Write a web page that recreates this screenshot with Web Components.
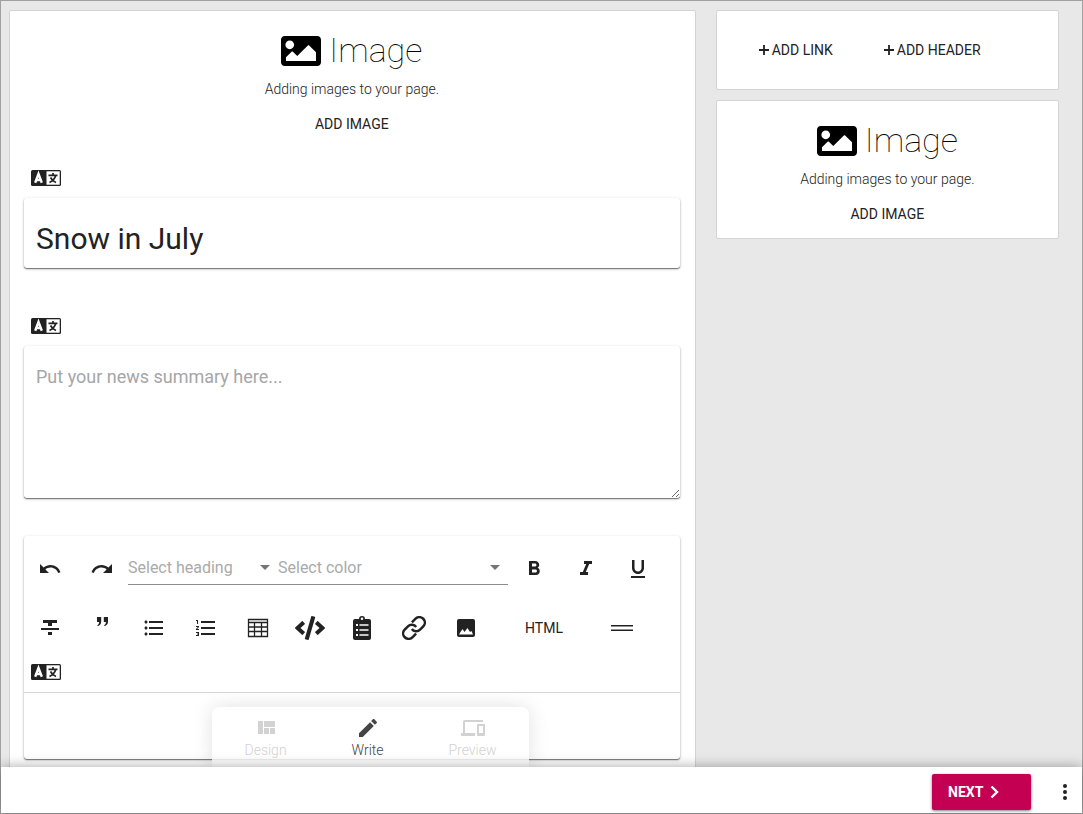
<!DOCTYPE html>
<html lang="en">
<head>
<meta charset="utf-8">
<title>News editor</title>
<style>
  html, body { height: 100%; margin: 0; }
  body { font: 14px/20px Roboto, "Liberation Sans", sans-serif; color: #222; }
</style>
</head>
<body>
<news-editor></news-editor>

<script>
const ICONS = {
  image: ['0 64 512 384', '<path d="M464 448H48c-26.51 0-48-21.49-48-48V112c0-26.51 21.49-48 48-48h416c26.51 0 48 21.49 48 48v288c0 26.51-21.49 48-48 48zM112 120c-30.928 0-56 25.072-56 56s25.072 56 56 56 56-25.072 56-56-25.072-56-56-56zM64 384h384V272l-87.515-87.515c-4.686-4.686-12.284-4.686-16.971 0L208 320l-55.515-55.515c-4.686-4.686-12.284-4.686-16.971 0L64 336v48z"/>'],
  translate: ['0 0 30 16', '<rect width="30" height="16" rx="1.5"/><rect x="15.500" y="1.300" width="13.200" height="13.400" fill="#fff"/><path d="M4.200 12.700 7.500 4l3.300 8.700M5.500 10h4" fill="none" stroke="#fff" stroke-width="2.400"/><path d="M17.500 5.300h9M22 3v2.300M24.700 5.500c-.8 3-3.200 5.500-6.200 7M19.500 7.500c1.200 2.300 3 4 5.500 5" fill="none" stroke="currentColor" stroke-width="1.700"/>'],
  undo: ['0 -1 24 24', '<path d="M12.5 8c-2.65 0-5.05.99-6.9 2.6L2 7v9h9l-3.62-3.62c1.39-1.16 3.16-1.88 5.12-1.88 3.54 0 6.55 2.31 7.6 5.5l2.37-.78C21.08 11.03 17.15 8 12.5 8z"/>'],
  redo: ['0 -1 24 24', '<path d="M18.4 10.6C16.55 8.99 14.15 8 11.5 8c-4.65 0-8.58 3.03-9.96 7.22L3.9 16c1.05-3.19 4.05-5.5 7.6-5.5 1.95 0 3.73.72 5.12 1.88L13 16h9V7l-3.6 3.6z"/>'],
  bold: ['0 -1 24 24', '<path d="M15.6 10.79c.97-.67 1.65-1.77 1.65-2.79 0-2.26-1.75-4-4-4H7v14h7.04c2.09 0 3.71-1.7 3.71-3.79 0-1.52-.86-2.82-2.15-3.42zM10 6.5h3c.83 0 1.5.67 1.5 1.5s-.67 1.5-1.5 1.5h-3v-3zm3.5 9H10v-3h3.5c.83 0 1.5.67 1.5 1.5s-.67 1.5-1.5 1.5z"/>'],
  italic: ['0 -1 24 24', '<path d="M10 4v3h2.21l-3.42 8H6v3h8v-3h-2.21l3.42-8H18V4z"/>'],
  underline: ['0 -1 24 24', '<path d="M12 17c3.31 0 6-2.69 6-6V3h-2.5v8c0 1.93-1.57 3.5-3.5 3.5S8.5 12.93 8.5 11V3H6v8c0 3.31 2.69 6 6 6zm-7 2v2h14v-2H5z"/>'],
  strike: ['0 0 24 24', '<path d="M10 19h4v-3h-4v3zM5 4v3h5v3h4V7h5V4H5zM3 14h18v-2H3v2z"/>'],
  quote: ['0 0 24 24', '<path d="M7 1h4.200v4.500c0 2.500-1.200 4-3.700 4.800V9c1.100-.5 1.600-1.500 1.600-3H7zM13.800 1H18v4.500c0 2.500-1.200 4-3.700 4.800V9c1.100-.5 1.600-1.500 1.600-3h-2.100z"/>'],
  bullets: ['0 0 24 24', '<path d="M4 10.5c-.83 0-1.5.67-1.5 1.5s.67 1.5 1.5 1.5 1.5-.67 1.5-1.5-.67-1.5-1.5-1.5zm0-6c-.83 0-1.5.67-1.5 1.5S3.17 7.5 4 7.5 5.5 6.83 5.5 6 4.83 4.5 4 4.5zm0 12c-.83 0-1.5.68-1.5 1.5s.68 1.5 1.5 1.5 1.5-.68 1.5-1.5-.67-1.5-1.5-1.5zM7 19h14v-2H7v2zm0-6h14v-2H7v2zm0-8v2h14V5H7z"/>'],
  numbers: ['0 0 24 24', '<path d="M2 17h2v.5H3v1h1v.5H2v1h3v-4H2v1zm1-9h1V4H2v1h1v3zm-1 3h1.8L2 13.1v.9h3v-1H3.2L5 10.9V10H2v1zm5-6v2h14V5H7zm0 14h14v-2H7v2zm0-6h14v-2H7v2z"/>'],
  table: ['0 0 24 24', '<path d="M2.500 3.500h19v17h-19zM2 6.500h20M2 11h20M2 15.500h20M8.500 7v14M15.500 7v14" fill="none" stroke="currentColor" stroke-width="1.300"/>'],
  code: ['0 0 640 512', '<path d="M278.9 511.5l-61-17.7c-6.4-1.8-10-8.5-8.2-14.9L346.2 8.7c1.8-6.4 8.5-10 14.9-8.2l61 17.7c6.4 1.8 10 8.5 8.2 14.9L293.8 503.3c-1.9 6.4-8.5 10.1-14.9 8.2zm-114-112.2l43.5-46.4c4.6-4.9 4.3-12.7-.8-17.2L117 256l90.6-79.7c5.1-4.5 5.5-12.3.8-17.2l-43.5-46.4c-4.500-4.800-12.100-5.100-17-.5L3.800 247.200c-5.100 4.700-5.100 12.800 0 17.500l144.100 135.100c4.900 4.600 12.500 4.400 17-.5zm327.200.6l144.100-135.100c5.100-4.700 5.100-12.800 0-17.500L492.100 112.100c-4.800-4.500-12.400-4.300-17 .5L431.600 159c-4.600 4.900-4.300 12.700.8 17.200L523 256l-90.600 79.700c-5.100 4.500-5.500 12.300-.8 17.200l43.500 46.400c4.500 4.900 12.100 5.100 17 .6z"/>'],
  clipboard: ['0 0 24 24', '<path fill-rule="evenodd" d="M5 3h4a3 3 0 0 1 6 0h4a2 2 0 0 1 2 2v17a2 2 0 0 1-2 2H5a2 2 0 0 1-2-2V5a2 2 0 0 1 2-2zM12 1.500a1.300 1.300 0 1 0 0 2.600 1.300 1.300 0 0 0 0-2.600zM6 8v2h2V8zM9.500 8.200v1.500H18.500v-1.500zM6 13v2h2v-2zM9.500 13.200v1.500H18.500v-1.500zM6 18v2h2v-2zM9.500 18.200v1.500H18.500v-1.500z"/>'],
  link: ['1 1 22 22', '<g fill="none" stroke="currentColor" stroke-width="2.300"><path d="M10 13a5 5 0 0 0 7.540.540l3-3a5 5 0 0 0-7.070-7.070l-3.400 3.400"/><path d="M14 11a5 5 0 0 0-7.540-.540l-3 3a5 5 0 0 0 7.070 7.070l3.400-3.400"/></g>'],
  photo: ['0 0 24 24', '<path fill-rule="evenodd" d="M5 3h14a2 2 0 0 1 2 2v14a2 2 0 0 1-2 2H5a2 2 0 0 1-2-2V5a2 2 0 0 1 2-2zM5 18.500h14l-1.500-3.500-1.500 1-2.500-4-3 4-2-3-2 3z"/>'],
  rule: ['0 0 24 24', '<path d="M1 9h22v1.500H1zM1 13.500h22V15H1z"/>'],
  plus: ['0 0 10 10', '<path d="M4.100 0h1.800v4.100H10v1.800H5.900V10H4.100V5.900H0V4.100h4.100z"/>'],
  caret: ['0 0 10 5', '<path d="M0 0h10L5 5z"/>'],
  design: ['0 0 24 24', '<path d="M10 18h5v-6h-5v6zm-6 0h5V5H4v13zm12 0h5v-6h-5v6zM10 5v6h11V5H10z"/>'],
  write: ['0 0 24 24', '<path d="M3 17.25V21h3.75L17.81 9.94l-3.75-3.75L3 17.25zM20.71 7.04c.39-.39.39-1.02 0-1.41l-2.34-2.34c-.39-.39-1.02-.39-1.41 0l-1.83 1.83 3.75 3.75 1.83-1.83z"/>'],
  preview: ['0 0 24 24', '<path d="M4 6h18V4H4c-1.1 0-2 .9-2 2v11H0v3h14v-3H4V6zm19 2h-6c-.55 0-1 .45-1 1v10c0 .55.45 1 1 1h6c.55 0 1-.45 1-1V9c0-.55-.45-1-1-1zm-1 9h-4v-7h4v7z"/>'],
  chevron: ['0 0 24 24', '<path d="m8.500 6.500 5.500 5.500-5.500 5.500" fill="none" stroke="currentColor" stroke-width="2.400"/>'],
  more: ['0 0 24 24', '<circle cx="12" cy="6" r="2"/><circle cx="12" cy="12" r="2"/><circle cx="12" cy="18" r="2"/>']
};

function define(name, html, setup) {
  const template = document.createElement('template');
  template.innerHTML = html;
  customElements.define(name, class extends HTMLElement {
    constructor() {
      super();
      this.attachShadow({ mode: 'open' }).append(template.content.cloneNode(true));
    }
    connectedCallback() { if (setup) setup(this, this.shadowRoot); }
  });
}

define('ui-icon', `
  <style>
    :host { display: inline-flex; flex: none; width: 24px; height: 24px; }
    svg { width: 100%; height: 100%; fill: currentColor; }
  </style>
  <svg aria-hidden="true"></svg>`, (el, root) => {
  const [box, body] = ICONS[el.getAttribute('name')];
  const svg = root.querySelector('svg');
  svg.setAttribute('viewBox', box);
  svg.innerHTML = body;
});

define('text-button', `
  <style>
    :host { display: inline-flex; }
    button { display: flex; align-items: center; gap: 3px; height: 34px; padding: 0 16px; border: 0;
      background: none; font: 400 14px/20px Roboto, sans-serif; color: #222; white-space: nowrap; cursor: pointer; }
  </style>
  <button type="button"><slot></slot></button>`);

define('tool-button', `
  <style>
    :host { display: flex; width: 52px; height: 60px; flex: none; }
    button { flex: 1; display: flex; align-items: center; justify-content: center; padding: 0; border: 0;
      background: none; font: 400 14px/20px Roboto, sans-serif; color: #222; cursor: pointer; }
  </style>
  <button type="button"><slot></slot></button>`, (el, root) => {
  root.querySelector('button').setAttribute('aria-label', el.getAttribute('label'));
});

define('ui-card', `
  <style>
    :host { display: block; box-sizing: border-box; background: #fff; border: 1px solid #d4d4d4; border-radius: 2px; }
  </style>
  <slot></slot>`);

define('image-panel', `
  <style>
    :host { display: flex; flex-direction: column; align-items: center; padding: 20px 0 7px; }
    h2 { display: flex; align-items: center; gap: 8px; height: 40px; margin: 0; font: 100 34px/38px Roboto, sans-serif; color: #000; }
    ui-icon { width: 40px; height: 30px; }
    span { height: 40px; }
    p { margin: 0; font-weight: 300; line-height: 36px; }
  </style>
  <h2><ui-icon name="image"></ui-icon><span>Image</span></h2>
  <p>Adding images to your page.</p>
  <text-button>ADD IMAGE</text-button>`);

define('translate-row', `
  <style>
    :host { display: flex; align-items: center; height: 40px; padding-left: 7px; }
    button { display: flex; padding: 0; border: 0; background: none; color: #222; cursor: pointer; }
    ui-icon { width: 30px; height: 16px; }
  </style>
  <button type="button" aria-label="Translate"><ui-icon name="translate"></ui-icon></button>`);

define('paper-field', `
  <style>
    :host { display: block; background: #fff; border-radius: 3px;
      box-shadow: 0 1px 1px rgba(0,0,0,.45), 0 1px 3px rgba(0,0,0,.25); }
  </style>
  <slot></slot>`);

define('pick-list', `
  <style>
    :host { display: flex; align-items: center; position: relative; box-sizing: border-box; height: 34px; border-bottom: 1px solid #8c8c8c; }
    select { appearance: none; flex: 1; min-width: 0; height: 33px; padding: 0 24px 0 0; border: 0; background: none;
      font: 400 16px/20px Roboto, sans-serif; color: #aaa; }
    ui-icon { position: absolute; right: 8px; width: 10px; height: 5px; color: #757575; pointer-events: none; }
  </style>
  <select><option></option></select><ui-icon name="caret"></ui-icon>`, (el, root) => {
  const label = el.getAttribute('label');
  root.querySelector('select').setAttribute('aria-label', label);
  root.querySelector('option').textContent = label;
});

define('rich-toolbar', `
  <style>
    :host { display: block; padding-top: 2px; }
    .row { display: flex; align-items: center; height: 60px; }
    .picks { display: flex; width: 380px; }
    .heading { width: 150px; }
    .color { flex: 1; }
    .wide { width: 104px; }
    .code { width: 30px; }
  </style>
  <div class="row">
    <tool-button label="Undo"><ui-icon name="undo"></ui-icon></tool-button>
    <tool-button label="Redo"><ui-icon name="redo"></ui-icon></tool-button>
    <div class="picks">
      <pick-list class="heading" label="Select heading"></pick-list>
      <pick-list class="color" label="Select color"></pick-list>
    </div>
    <tool-button label="Bold"><ui-icon name="bold"></ui-icon></tool-button>
    <tool-button label="Italic"><ui-icon name="italic"></ui-icon></tool-button>
    <tool-button label="Underline"><ui-icon name="underline"></ui-icon></tool-button>
  </div>
  <div class="row">
    <tool-button label="Strikethrough"><ui-icon name="strike"></ui-icon></tool-button>
    <tool-button label="Quote"><ui-icon name="quote"></ui-icon></tool-button>
    <tool-button label="Bulleted list"><ui-icon name="bullets"></ui-icon></tool-button>
    <tool-button label="Numbered list"><ui-icon name="numbers"></ui-icon></tool-button>
    <tool-button label="Table"><ui-icon name="table"></ui-icon></tool-button>
    <tool-button label="Code"><ui-icon class="code" name="code"></ui-icon></tool-button>
    <tool-button label="Form"><ui-icon name="clipboard"></ui-icon></tool-button>
    <tool-button label="Link"><ui-icon name="link"></ui-icon></tool-button>
    <tool-button label="Picture"><ui-icon name="photo"></ui-icon></tool-button>
    <tool-button class="wide" label="HTML">HTML</tool-button>
    <tool-button label="Divider"><ui-icon name="rule"></ui-icon></tool-button>
  </div>`);

define('mode-tab', `
  <style>
    :host { display: flex; color: #d2d2d2; }
    :host([active]) { color: #444; }
    button { display: flex; flex-direction: column; align-items: center; padding: 0; border: 0; background: none;
      font: 300 14px/20px Roboto, sans-serif; color: inherit; cursor: pointer; }
  </style>
  <button type="button"><slot name="icon"></slot><slot></slot></button>`);

define('mode-switch', `
  <style>
    :host { display: flex; justify-content: space-around; box-sizing: border-box; padding: 9px 0 7px;
      background: rgba(255,255,255,.85); border-radius: 8px 8px 0 0; box-shadow: 0 0 20px rgba(0,0,0,.12); }
  </style>
  <mode-tab><ui-icon slot="icon" name="design"></ui-icon>Design</mode-tab>
  <mode-tab active><ui-icon slot="icon" name="write"></ui-icon>Write</mode-tab>
  <mode-tab><ui-icon slot="icon" name="preview"></ui-icon>Preview</mode-tab>`);

define('action-bar', `
  <style>
    :host { display: flex; align-items: center; justify-content: flex-end; gap: 22px; height: 46px; padding: 4px 5px 0 0; box-sizing: border-box;
      background: #fff; box-shadow: 0 0 12px rgba(0,0,0,.35); }
    button { display: flex; align-items: center; border: 0; padding: 0; background: none; color: #222; cursor: pointer; }
    .next { width: 99px; height: 36px; padding-left: 16px; border-radius: 2px; background: #c40053; color: #fff;
      font: 700 14px/20px Roboto, sans-serif; box-shadow: 0 1px 3px rgba(0,0,0,.5); }
  </style>
  <button class="next" type="button">NEXT<ui-icon name="chevron"></ui-icon></button>
  <button type="button" aria-label="More"><ui-icon name="more"></ui-icon></button>`);

define('news-editor', `
  <style>
    :host { display: flex; flex-direction: column; box-sizing: border-box; height: 100vh; border: 1px solid #a0a0a0; background: #e8e8e8; }
    main { flex: 1; min-height: 0; position: relative; overflow: hidden;
      display: grid; grid-template-columns: 2fr 1fr; gap: 20px; padding: 9px 23px 0 8px; }
    .story { padding: 0 15px 20px 14px; }
    .side { display: flex; flex-direction: column; gap: 10px; align-self: start; }
    .links { display: flex; gap: 19px; padding: 22px 0 22px 26px; }
    .links ui-icon { width: 10px; height: 10px; }
    .first { margin-top: 10px; }
    paper-field { margin-bottom: 38px; }
    input, textarea { display: block; box-sizing: border-box; width: 100%; border: 0; outline: 0; background: none; color: #222; }
    input { height: 70px; padding: 12px 12px 2px; font: 400 30px/40px Roboto, sans-serif; }
    textarea { height: 152px; padding: 19px 12px; resize: vertical; font: 400 18px/24px Roboto, sans-serif; }
    textarea::placeholder { color: #a6a6a6; }
    .tight { height: 28px; padding-bottom: 6px; border-bottom: 1px solid #d6d6d6; }
    .body { height: 66px; }
    mode-switch { position: absolute; left: 211px; bottom: 0; width: 317px; }
    action-bar { flex: none; position: relative; }
  </style>
  <main>
    <ui-card class="story">
      <image-panel></image-panel>
      <translate-row class="first"></translate-row>
      <paper-field><input type="text" aria-label="Title" value="Snow in July"></paper-field>
      <translate-row></translate-row>
      <paper-field><textarea aria-label="Summary" placeholder="Put your news summary here..."></textarea></paper-field>
      <paper-field>
        <rich-toolbar></rich-toolbar>
        <translate-row class="tight"></translate-row>
        <div class="body" contenteditable="true" role="textbox" aria-label="Body"></div>
      </paper-field>
    </ui-card>
    <div class="side">
      <ui-card class="links">
        <text-button><ui-icon name="plus"></ui-icon>ADD LINK</text-button>
        <text-button><ui-icon name="plus"></ui-icon>ADD HEADER</text-button>
      </ui-card>
      <ui-card><image-panel></image-panel></ui-card>
    </div>
    <mode-switch></mode-switch>
  </main>
  <action-bar></action-bar>`);
</script>
</body>
</html>
